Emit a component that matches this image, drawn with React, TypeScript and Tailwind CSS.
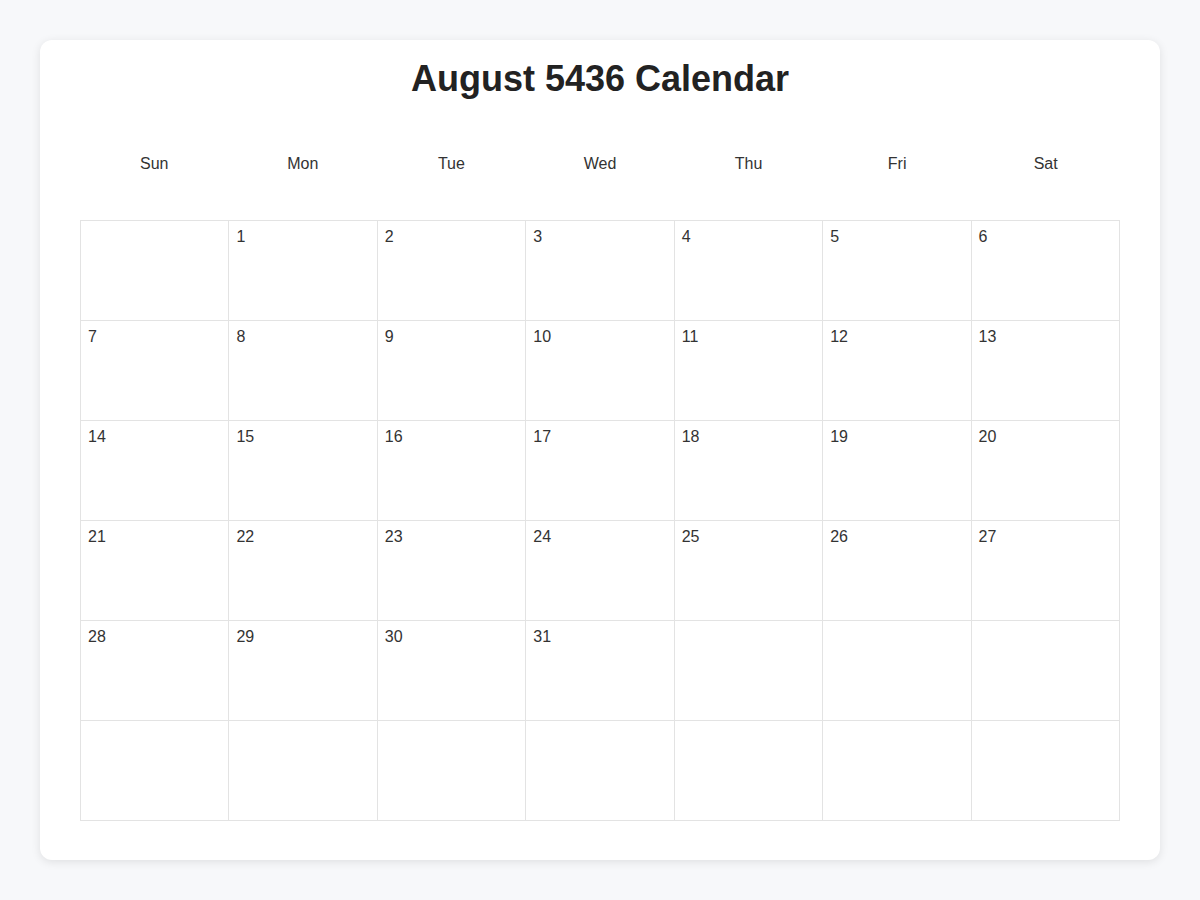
const DAYS = ["Sun", "Mon", "Tue", "Wed", "Thu", "Fri", "Sat"];

// August 5436 starts on a Monday; 6 rows x 7 cols
const CELLS: (number | null)[] = Array.from({ length: 42 }, (_, i) => {
  const d = i; // offset 1
  return d >= 1 && d <= 31 ? d : null;
});

export default function App() {
  return (
    <div className="min-h-[900px] bg-[#f7f8fa] p-10 font-['Liberation_Sans',Arial,sans-serif]">
      <div className="rounded-[12px] bg-white px-10 pb-[39px] pt-[19px] shadow-[0_2px_10px_rgba(0,0,0,0.1)]">
        <h1 className="text-center text-[36px] font-bold leading-[40px] text-[#222]">
          August 5436 Calendar
        </h1>
        <div className="mb-[47px] mt-[56px] grid grid-cols-7">
          {DAYS.map((d) => (
            <div key={d} className="text-center text-[16px] leading-[18px] text-[#333]">
              {d}
            </div>
          ))}
        </div>
        <div className="grid grid-cols-7 border-l border-t border-[#e3e3e3]">
          {CELLS.map((n, i) => (
            <div
              key={i}
              className="h-[100px] border-b border-r border-[#e3e3e3] pl-[7px] pr-2 pt-[7px] text-[16px] leading-[18px] text-[#333]"
            >
              {n ?? ""}
            </div>
          ))}
        </div>
      </div>
    </div>
  );
}
